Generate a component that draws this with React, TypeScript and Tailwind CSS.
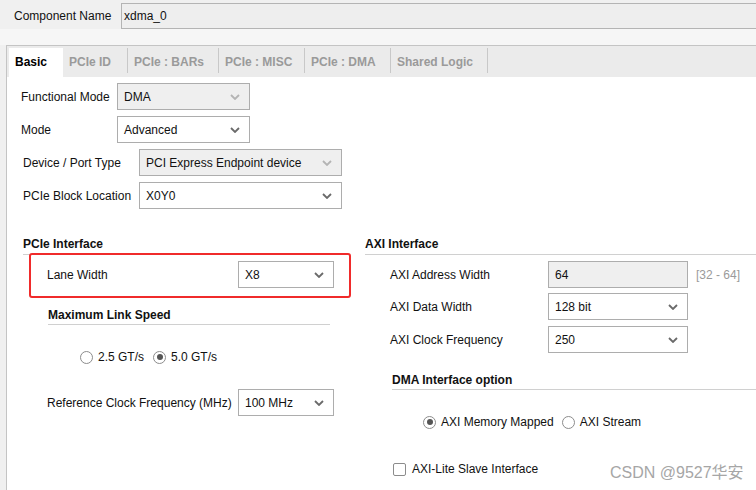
import React from 'react';
import clsx from 'clsx';

const Chevron = ({ disabled }: { disabled?: boolean }) => (
  <svg width="10" height="6" viewBox="0 0 10 6">
    <path
      d="M1 1l4 4 4-4"
      fill="none"
      stroke={disabled ? '#b4b4b4' : '#6a6a6a'}
      strokeWidth="1.8"
    />
  </svg>
);

const Select = ({
  value,
  className,
  disabled,
}: {
  value: string;
  className: string;
  disabled?: boolean;
}) => (
  <div
    className={clsx(
      'h-[27px] shrink-0 flex items-center justify-between pl-[6px] pr-[9px] border border-[#adadad]',
      disabled ? 'bg-[#efefef]' : 'bg-white',
      className
    )}
  >
    <span>{value}</span>
    <Chevron disabled={disabled} />
  </div>
);

const Radio = ({ checked, label }: { checked?: boolean; label: string }) => (
  <div className="flex items-center gap-[5px]">
    <span className="w-[13px] h-[13px] rounded-full border border-[#8c8c8c] bg-white flex items-center justify-center">
      {checked && <span className="w-[6px] h-[6px] rounded-full bg-[#555]" />}
    </span>
    <span>{label}</span>
  </div>
);

const tabs = [
  { name: 'PCIe ID', w: 'w-[64px]' },
  { name: 'PCIe : BARs', w: 'w-[90px]' },
  { name: 'PCIe : MISC', w: 'w-[85px]' },
  { name: 'PCIe : DMA', w: 'w-[85px]' },
  { name: 'Shared Logic', w: 'w-[96px]' },
];

export default function App() {
  return (
    <div className="relative w-[756px] h-[490px] overflow-hidden bg-[#f0f0f0] text-[12px] leading-[14px] text-[#111] font-['Liberation_Sans',Arial,sans-serif]">
      {/* component name */}
      <div className="flex items-center pt-[3px] pl-[14px]">
        <span className="w-[107px] shrink-0">Component Name</span>
        <div className="h-[26px] w-[660px] shrink-0 border border-[#b4b4b4] bg-[#eeeeee] flex items-center pl-[2px]">
          xdma_0
        </div>
      </div>
      <div className="h-[16px] bg-[#f6f6f6]" />

      {/* panel */}
      <div className="ml-[6px] border-l border-t border-[#c4c4c4] bg-white h-[460px]">
        <div className="flex items-start h-[31px] bg-[#ebebeb] pl-[2px] pt-[2px]">
          <div className="w-[54px] h-[29px] bg-white flex items-center pl-[6px] pb-[2px] font-bold text-black">
            Basic
          </div>
          {tabs.map((t) => (
            <React.Fragment key={t.name}>
              <div
                className={clsx(
                  'h-[27px] flex items-center pl-[6px] font-bold text-[#9a9a9a]',
                  t.w
                )}
              >
                {t.name}
              </div>
              <span className="w-px h-[25px] bg-[#c8c8c8]" />
            </React.Fragment>
          ))}
        </div>

        <div className="pl-[14px] pt-[6px]">
          <div className="flex items-center">
            <span className="w-[96px] shrink-0">Functional Mode</span>
            <Select value="DMA" className="w-[133px]" disabled />
          </div>
          <div className="flex items-center mt-[6px]">
            <span className="w-[96px] shrink-0">Mode</span>
            <Select value="Advanced" className="w-[133px]" />
          </div>
          <div className="flex items-center mt-[6px] pl-[2px]">
            <span className="w-[116px] shrink-0">Device / Port Type</span>
            <Select value="PCI Express Endpoint device" className="w-[203px]" disabled />
          </div>
          <div className="flex items-center mt-[6px] pl-[2px]">
            <span className="w-[116px] shrink-0">PCIe Block Location</span>
            <Select value="X0Y0" className="w-[203px]" />
          </div>

          <div className="flex mt-[28px] pl-[2px]">
            {/* PCIe interface */}
            <div className="w-[342px] shrink-0">
              <div className="w-[326px] pb-[3px] border-b border-[#d0d0d0] font-bold">
                PCIe Interface
              </div>
              <div className="relative -mt-[2px] ml-[6px] w-[322px] border-2 border-[#f02b2b] rounded-[3px] flex items-center pt-[6px] pb-[8px] pl-[16px]">
                <span className="w-[191px] shrink-0">Lane Width</span>
                <Select value="X8" className="w-[96px]" />
              </div>
              <div className="ml-[25px] w-[282px] mt-[10px] pb-[2px] border-b border-[#d0d0d0] font-bold">
                Maximum Link Speed
              </div>
              <div className="ml-[57px] mt-[25px] flex items-center gap-[9px]">
                <Radio label="2.5 GT/s" />
                <Radio label="5.0 GT/s" checked />
              </div>
              <div className="flex items-center ml-[24px] mt-[25px]">
                <span className="w-[191px] shrink-0">Reference Clock Frequency (MHz)</span>
                <Select value="100 MHz" className="w-[96px]" />
              </div>
            </div>

            {/* AXI interface */}
            <div className="flex-1">
              <div className="pb-[3px] border-b border-[#d0d0d0] font-bold">AXI Interface</div>
              <div className="flex items-center ml-[25px] mt-[6px]">
                <span className="w-[158px] shrink-0">AXI Address Width</span>
                <div className="h-[27px] w-[140px] shrink-0 border border-[#adadad] bg-[#efefef] flex items-center pl-[6px]">
                  64
                </div>
                <span className="ml-[8px] text-[#9a9a9a]">[32 - 64]</span>
              </div>
              <div className="flex items-center ml-[25px] mt-[5px]">
                <span className="w-[158px] shrink-0">AXI Data Width</span>
                <Select value="128 bit" className="w-[140px]" />
              </div>
              <div className="flex items-center ml-[25px] mt-[6px]">
                <span className="w-[158px] shrink-0">AXI Clock Frequency</span>
                <Select value="250" className="w-[140px]" />
              </div>

              <div className="ml-[27px] mt-[20px] pb-[2px] border-b border-[#d0d0d0] font-bold">
                DMA Interface option
              </div>
              <div className="ml-[58px] mt-[25px] flex items-center gap-[8px]">
                <Radio label="AXI Memory Mapped" checked />
                <Radio label="AXI Stream" />
              </div>
              <div className="ml-[28px] mt-[33px] flex items-center gap-[6px]">
                <span className="w-[13px] h-[13px] rounded-[2px] border border-[#8c8c8c] bg-white" />
                <span>AXI-Lite Slave Interface</span>
              </div>
            </div>
          </div>
        </div>
      </div>

      <div className="absolute left-[610px] top-[463px] text-[16px] leading-[20px] text-[#a6a6a6] font-['Liberation_Sans','Noto_Sans_CJK_SC',sans-serif]">
        CSDN @9527华安
      </div>
    </div>
  );
}
